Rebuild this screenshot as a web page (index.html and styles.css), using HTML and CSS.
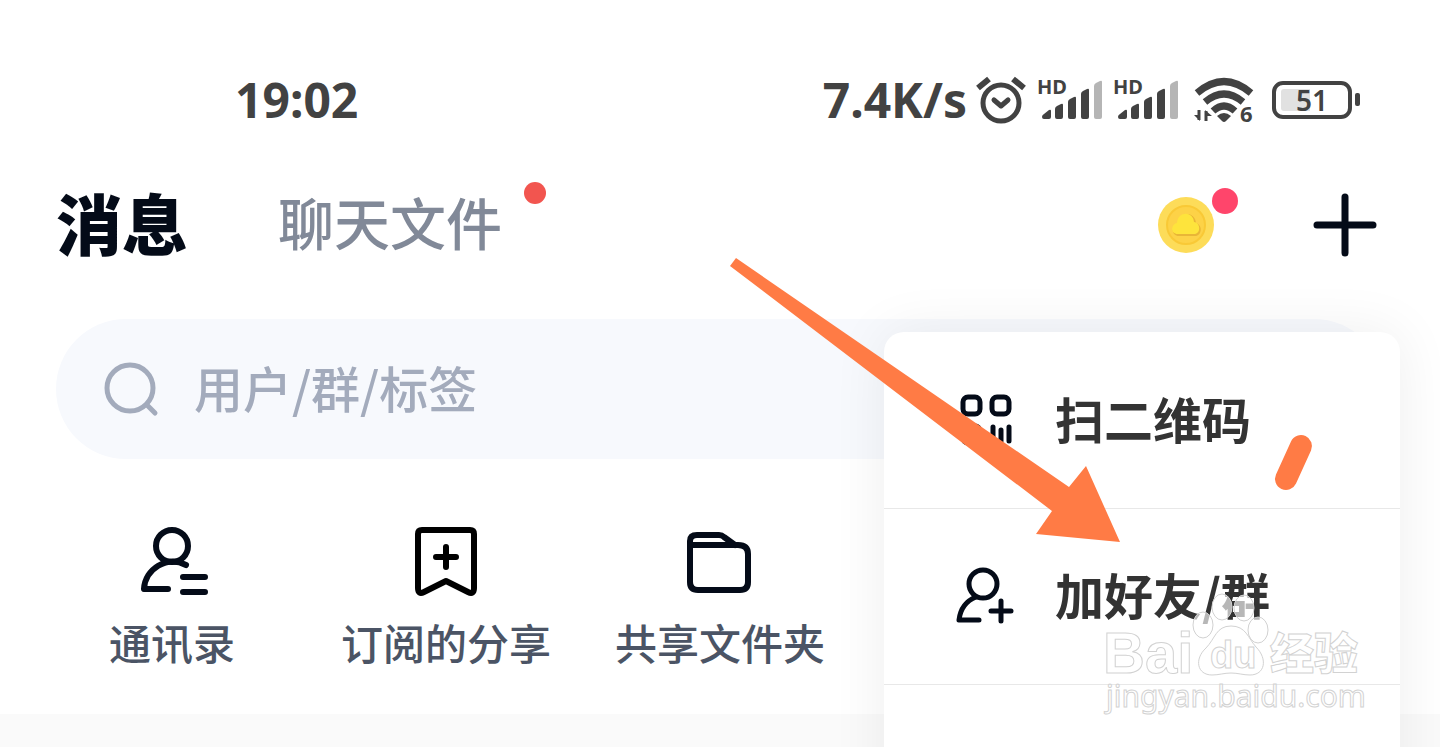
FILE: index.html
```html
<!DOCTYPE html>
<html lang="zh-CN">
<head>
    <meta charset="UTF-8">
    <meta name="viewport" content="width=device-width, initial-scale=1">
    <title>消息</title>
    <link rel="stylesheet" href="styles.css">
</head>
<body>
    <div class="page">
        <!-- 状态栏 -->
        <header class="status-bar">
            <span class="clock">19:02</span>
            <span class="speed">7.4K/s</span>
            <svg class="alarm" width="50" height="48" viewBox="0 0 50 48" fill="none" stroke="#424242">
                <circle cx="25" cy="27" r="18" stroke-width="5"/>
                <path d="M2 12 13 3M37 3l11 9" stroke-width="6"/>
                <path d="M18 24l7 6 7-6" stroke-width="5" stroke-linecap="round" stroke-linejoin="round"/>
            </svg>
            <svg class="signal" width="63" height="44" viewBox="0 0 63 44" fill="#424242">
                <text x="-2" y="16">HD</text>
                <path d="M3 39q0-2 2-3l5-4q2-1 2 1v6q0 2-2 2H5q-2 0-2-2zM16 31q0-2 2-3l4-2q2-1 2 1v12q0 2-2 2h-4q-2 0-2-2zM29 24q0-2 2-3l4-2q2-1 2 1v19q0 2-2 2h-4q-2 0-2-2zM42 16q0-2 2-3l4-2q2-1 2 1v27q0 2-2 2h-4q-2 0-2-2z"/>
                <path d="M55 8q0-2 2-3l4-2q2-1 2 1v35q0 2-2 2h-4q-2 0-2-2z" fill="#b5b5b5"/>
            </svg>
            <svg class="signal" width="63" height="44" viewBox="0 0 63 44" fill="#424242">
                <text x="-2" y="16">HD</text>
                <path d="M3 39q0-2 2-3l5-4q2-1 2 1v6q0 2-2 2H5q-2 0-2-2zM16 31q0-2 2-3l4-2q2-1 2 1v12q0 2-2 2h-4q-2 0-2-2zM29 24q0-2 2-3l4-2q2-1 2 1v19q0 2-2 2h-4q-2 0-2-2zM42 16q0-2 2-3l4-2q2-1 2 1v27q0 2-2 2h-4q-2 0-2-2z"/>
                <path d="M55 8q0-2 2-3l4-2q2-1 2 1v35q0 2-2 2h-4q-2 0-2-2z" fill="#b5b5b5"/>
            </svg>
            <svg class="wifi" width="60" height="48" viewBox="0 0 60 48" fill="none" stroke="#424242" stroke-width="7">
                <path d="M3 17Q30-6 57 17M11 26q19-16 38 0M19 35q11-10 22 0"/>
                <path d="M23 40q7-6 14 0l-5 5q-2 2-4 0z" fill="#424242" stroke="none"/>
                <path d="M5 34v10M12 35v10" stroke-width="3"/>
                <path d="M0 39h6v6zM11 34l7 6h-6z" fill="#424242" stroke="none"/>
                <text x="46" y="46">6</text>
            </svg>
            <svg class="battery" width="88" height="38" viewBox="0 0 88 38">
                <rect x="2" y="2" width="76" height="34" rx="9" fill="none" stroke="#424242" stroke-width="4"/>
                <path d="M12 8h26v22H12q-3 0-3-3V11q0-3 3-3z" fill="#e1e1e1"/>
                <rect x="83" y="12" width="5" height="13" rx="2" fill="#424242"/>
                <text x="40" y="30" text-anchor="middle">51</text>
            </svg>
        </header>

        <!-- 顶部标签 -->
        <nav class="tabs">
            <a href="#" class="tab active">消息</a>
            <a href="#" class="tab">聊天文件<span class="dot"></span></a>
            <button class="coin" aria-label="金币">
                <svg width="56" height="56" viewBox="0 0 56 56">
                    <circle cx="28" cy="28" r="28" fill="#fddc59"/>
                    <circle cx="28" cy="28" r="19" fill="#fdd247" stroke="#f9c936" stroke-width="2"/>
                    <path d="M21 39c-8 0-8-11-1-12 0-13 17-13 18-1 7 2 6 13-1 13z" fill="#e9b637"/>
                    <path d="M20 37c-8 0-7-10-1-11 1-12 16-12 17-1 7 1 7 12 0 12z" fill="#fee43c"/>
                </svg>
                <span class="dot"></span>
            </button>
            <button class="add" aria-label="添加">
                <svg width="64" height="64" viewBox="0 0 64 64" stroke="#040b18" stroke-width="7" stroke-linecap="round">
                    <path d="M32 4v56M4 32h56"/>
                </svg>
            </button>
        </nav>

        <!-- 搜索框 -->
        <label class="search" for="keyword">
            <svg width="54" height="54" viewBox="0 0 54 54" fill="none" stroke="#a3abbc" stroke-width="5" stroke-linecap="round">
                <circle cx="26" cy="26" r="23"/>
                <path d="M43 43l8 8"/>
            </svg>
            <input type="text" id="keyword" placeholder="用户/群/标签">
        </label>

        <!-- 快捷入口 -->
        <div class="shortcuts">
            <a href="#">
                <svg width="72" height="72" viewBox="0 0 72 72" fill="none" stroke="#040b18" stroke-width="6" stroke-linecap="round" stroke-linejoin="round">
                    <circle cx="36" cy="19" r="16"/>
                    <path d="M50 38C31 28 9 42 8 62h24M47 50h22M47 65h22"/>
                </svg>
                通讯录
            </a>
            <a href="#">
                <svg width="72" height="72" viewBox="0 0 72 72" fill="none" stroke="#000" stroke-width="6" stroke-linecap="round" stroke-linejoin="round">
                    <path d="M12 3h48q4 0 4 4v54q0 7-6 4L36 54 14 65q-6 3-6-4V7q0-4 4-4z"/>
                    <path d="M36 20v20M26 30h20"/>
                </svg>
                订阅的分享
            </a>
            <a href="#">
                <svg width="72" height="72" viewBox="0 0 72 72" fill="none" stroke="#040b18" stroke-width="6" stroke-linecap="round" stroke-linejoin="round">
                    <path d="M6 18v-4q0-6 7-6h22q3 0 5 2l11 8"/>
                    <path d="M6 18h48q10 0 10 9v28q0 8-8 8H14q-8 0-8-8z"/>
                </svg>
                共享文件夹
            </a>
        </div>

        <div class="divider"></div>

        <!-- 添加菜单 -->
        <ul class="menu">
            <li>
                <button>
                    <svg width="60" height="60" viewBox="0 0 60 60" fill="none" stroke="#040b18" stroke-width="5" stroke-linecap="round">
                        <rect x="8" y="7" width="17" height="17" rx="5"/>
                        <rect x="37" y="7" width="17" height="17" rx="5"/>
                        <rect x="8" y="36" width="17" height="17" rx="5"/>
                        <path d="M38 37v14M46 40v11M54 37v14"/>
                    </svg>
                    <span>扫二维码</span>
                </button>
            </li>
            <li>
                <button>
                    <svg width="60" height="60" viewBox="0 0 60 60" fill="none" stroke="#040b18" stroke-width="5" stroke-linecap="round" stroke-linejoin="round">
                        <circle cx="28" cy="17" r="14"/>
                        <path d="M21 30Q6 36 4 53h20M36 44h20M46 34v20"/>
                    </svg>
                    <span>加好友/群</span>
                </button>
            </li>
            <li></li>
        </ul>

        <!-- 箭头标注 -->
        <svg class="arrow" width="600" height="300" viewBox="0 0 600 300" fill="#ff7b45">
            <path d="M16 8 349 237l17-21 34 76-84-8 16-23L10 16z"/>
            <path d="M581 196l-15 33" stroke="#ff7b45" stroke-width="22" stroke-linecap="round"/>
        </svg>

        <!-- 水印 -->
        <svg class="watermark" width="280" height="130" viewBox="0 0 280 130">
            <text class="brand" x="3" y="83">Bai</text>
            <ellipse cx="103" cy="35" rx="10" ry="13"/>
            <ellipse cx="122" cy="17" rx="10" ry="13"/>
            <ellipse cx="144" cy="18" rx="10" ry="13"/>
            <ellipse cx="158" cy="40" rx="10" ry="13"/>
            <path d="M131 36c15 0 17 12 25 21 12 12 9 28-6 28-7 0-12-2-19-2s-12 2-19 2c-15 0-18-16-6-27 9-9 10-22 25-22z"/>
            <text class="du" x="110" y="78">du</text>
            <text class="cn" x="170" y="80">经验</text>
            <text class="url" x="6" y="117">jingyan.baidu.com</text>
        </svg>
    </div>
</body>
</html>
```
FILE: styles.css
```css
* {
    box-sizing: border-box;
}
body {
    margin: 0;
    background-color: #fff;
    font-family: "Noto Sans CJK SC", sans-serif;
}
a {
    text-decoration: none;
}
button {
    padding: 0;
    border: none;
    background: none;
    font-family: inherit;
    cursor: pointer;
}
svg {
    display: block;
    flex: none;
    overflow: visible;
}
.page {
    position: relative;
    min-height: 100vh;
    overflow: hidden;
    display: flex;
    flex-direction: column;
}

/* 状态栏 */
.status-bar {
    display: flex;
    align-items: center;
    height: 160px;
    padding: 40px 80px 0 235px;
    color: #424242;
    font-family: "Noto Sans", sans-serif;
    font-size: 48px;
    font-weight: 700;
    line-height: 64px;
}
.status-bar text {
    font-family: "Noto Sans", sans-serif;
    font-weight: 700;
    fill: #424242;
    stroke: none;
}
.speed {
    margin-left: auto;
}
.alarm {
    margin-left: 9px;
}
.signal {
    margin-left: 13px;
}
.signal text {
    font-size: 20px;
}
.wifi {
    margin-left: 16px;
}
.wifi text {
    font-size: 22px;
}
.battery {
    margin-left: 18px;
}
.battery text {
    font-size: 28px;
    font-weight: 600;
}

/* 顶部标签 */
.tabs {
    display: flex;
    align-items: center;
    height: 130px;
    padding: 0 63px 0 56px;
}
.tab {
    position: relative;
    margin-right: 90px;
    padding-bottom: 8px;
    color: #818998;
    font-size: 56px;
    font-weight: 500;
    line-height: 80px;
}
.tab.active {
    color: #040b18;
    font-size: 66px;
    font-weight: 900;
}
.dot {
    position: absolute;
    top: 1px;
    right: -44px;
    width: 22px;
    height: 22px;
    border-radius: 50%;
    background-color: #f2554f;
}
.coin {
    position: relative;
    margin-left: auto;
    margin-right: 99px;
}
.coin .dot {
    top: -9px;
    right: -24px;
    width: 26px;
    height: 26px;
    background-color: #ff456b;
}

/* 搜索框 */
.search {
    display: flex;
    align-items: center;
    height: 140px;
    margin: 29px 56px 0;
    padding: 0 48px;
    border-radius: 70px;
    background-color: #f7f9fd;
}
.search input {
    flex: 1;
    min-width: 0;
    margin-left: 36px;
    padding: 0 0 4px;
    border: none;
    outline: none;
    background: none;
    color: #040b18;
    font-family: inherit;
    font-size: 49px;
    font-weight: 500;
    line-height: 72px;
}
.search input::placeholder {
    color: #a3abbc;
    opacity: 1;
}

/* 快捷入口 */
.shortcuts {
    display: grid;
    grid-template-columns: repeat(5, 1fr);
    padding: 68px 35px 40px;
}
.shortcuts a {
    display: flex;
    flex-direction: column;
    align-items: center;
    gap: 11px;
    color: #4b5465;
    font-size: 42px;
    font-weight: 500;
    line-height: 64px;
    white-space: nowrap;
}
.divider {
    flex: 1;
    min-height: 32px;
    background-color: #fafafa;
}

/* 添加菜单 */
.menu {
    position: absolute;
    top: 332px;
    right: 40px;
    width: 516px;
    margin: 0;
    padding: 0;
    border-radius: 20px;
    background-color: #fff;
    box-shadow: 0 0 56px rgba(0, 0, 0, 0.07);
    list-style: none;
}
.menu li {
    height: 176px;
}
.menu li + li {
    border-top: 1px solid #e8e8e8;
}
.menu button {
    display: flex;
    align-items: center;
    gap: 40px;
    width: 100%;
    height: 100%;
    padding-left: 71px;
    color: #333;
    font-size: 49px;
    font-weight: 700;
}
.menu span {
    padding-bottom: 6px;
}

/* 标注和水印 */
.arrow {
    position: absolute;
    top: 250px;
    right: 120px;
    pointer-events: none;
}
.watermark {
    position: absolute;
    top: 590px;
    right: 60px;
    fill: rgba(255, 255, 255, 0.65);
    stroke: #d2d2d2;
    stroke-width: 1px;
    pointer-events: none;
}
.watermark .brand {
    font-family: "Liberation Sans", sans-serif;
    font-size: 58px;
    font-weight: 700;
}
.watermark .du {
    font-family: "Liberation Sans", sans-serif;
    font-size: 38px;
    font-weight: 700;
}
.watermark .cn {
    font-size: 44px;
    font-weight: 900;
}
.watermark .url {
    font-family: "Noto Sans", sans-serif;
    font-size: 30px;
}
```
